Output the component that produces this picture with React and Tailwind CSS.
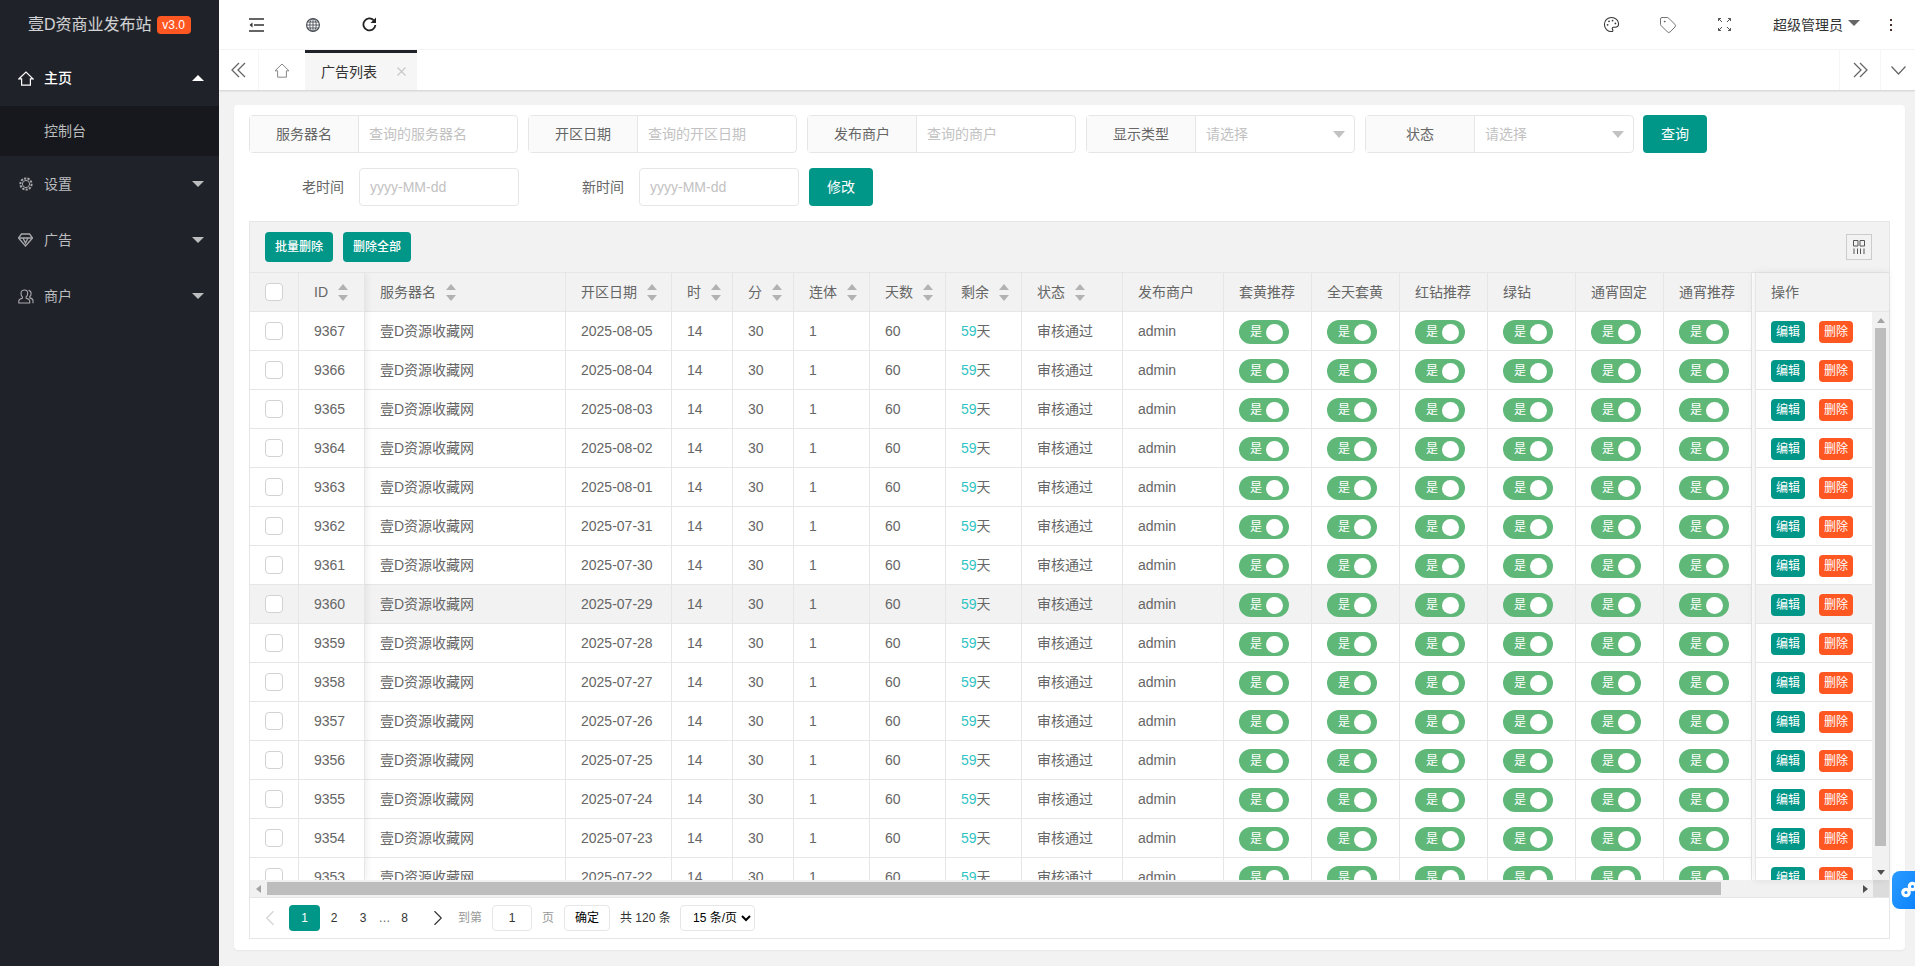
import React from 'react';
import { Palette, Tag, ChevronLeft, ChevronRight } from 'lucide-react';

const dates = [
  '2025-08-05', '2025-08-04', '2025-08-03', '2025-08-02', '2025-08-01',
  '2025-07-31', '2025-07-30', '2025-07-29', '2025-07-28', '2025-07-27',
  '2025-07-26', '2025-07-25', '2025-07-24', '2025-07-23', '2025-07-22',
];
const rows = dates.map((date, i) => ({ id: 9367 - i, date }));

const columns = [
  { title: 'ID', width: 66, sort: true },
  { title: '服务器名', width: 201, sort: true },
  { title: '开区日期', width: 106, sort: true },
  { title: '时', width: 61, sort: true },
  { title: '分', width: 61, sort: true },
  { title: '连体', width: 76, sort: true },
  { title: '天数', width: 76, sort: true },
  { title: '剩余', width: 76, sort: true },
  { title: '状态', width: 101, sort: true },
  { title: '发布商户', width: 101 },
  { title: '套黄推荐', width: 88 },
  { title: '全天套黄', width: 88 },
  { title: '红钻推荐', width: 88 },
  { title: '绿钻', width: 88 },
  { title: '通宵固定', width: 88 },
  { title: '通宵推荐', width: 88 },
];

const HOVER_ROW = 9360;

const HomeIcon = ({ className, strokeWidth = 1.2 }) => (
  <svg width="16" height="15" viewBox="0 0 16 15" fill="none" stroke="currentColor" strokeWidth={strokeWidth} className={className}>
    <path d="M1 7.8 8 1l7 6.8h-2.6v6.4H3.6V7.8z" />
  </svg>
);

const GearIcon = () => (
  <svg width="14" height="14" viewBox="0 0 14 14" fill="none" stroke="currentColor">
    <circle cx="7" cy="7" r="5.6" strokeWidth="2" strokeDasharray="2.2 1.2" />
    <circle cx="7" cy="7" r="3.6" strokeWidth="1" />
  </svg>
);

const GemIcon = () => (
  <svg width="15" height="14" viewBox="0 0 15 14" fill="none" stroke="currentColor" strokeWidth="1.3">
    <path d="M3.5 1h8l3 4-7 8-7-8z" />
    <path d="M1 5h13M5 5l2.5 5L10 5" />
  </svg>
);

const MerchantIcon = () => (
  <svg width="16" height="15" viewBox="0 0 16 15" fill="none" stroke="currentColor" strokeWidth="1.1">
    <path d="M6.5 1c2 0 3.2 1.500 3.200 3.400 0 1.500-.7 2.800-1.600 3.500v1.300c1.800.5 3.600 1.300 3.600 2.600v2.200H.8v-2.200c0-1.300 1.800-2.100 3.600-2.600V7.900C3.500 7.200 3 5.900 3 4.400 3 2.500 4.500 1 6.500 1z" />
    <path d="M10.500 1.300c1.700.4 2.600 1.700 2.600 3.200 0 1.300-.5 2.400-1.300 3v1.400c1.700.5 3.200 1.300 3.200 2.600v2.700" />
  </svg>
);

const Caret = ({ up, white }) => (
  <span
    className={`inline-block w-0 h-0 border-x-[6px] border-x-transparent ${
      up ? 'border-b-[6px] border-b-white' : `border-t-[6px] ${white ? 'border-t-white' : 'border-t-[#bcbdbf]'}`
    }`}
  />
);

const SideItem = ({ icon, label, open }) => (
  <div className="h-14 flex items-center pl-[18px] pr-[15px] text-[#a8a9ac]">
    <span className="w-[26px] flex">{icon}</span>
    <span className={`flex-1 text-sm ${open ? 'text-white font-medium' : 'text-[#bcbdbf]'}`}>{label}</span>
    <Caret up={open} />
  </div>
);

const Sidebar = () => (
  <aside className="w-[219px] shrink-0 bg-[#20222a] flex flex-col">
    <div className="h-[50px] flex items-center pl-[28px] text-white/80">
      <span className="text-base">壹D资商业发布站</span>
      <span className="ml-[5px] w-[34px] h-[18px] flex items-center justify-center bg-[#ff5722] text-white text-xs rounded-sm">v3.0</span>
    </div>
    <SideItem open label="主页" icon={<HomeIcon className="text-white" />} />
    <div className="h-[50px] bg-[#16181d] flex items-center pl-[44px] text-sm text-[#bcbdbf]">控制台</div>
    <SideItem label="设置" icon={<span className="ml-[1px] flex"><GearIcon /></span>} />
    <SideItem label="广告" icon={<GemIcon />} />
    <SideItem label="商户" icon={<MerchantIcon />} />
  </aside>
);

const FoldIcon = () => (
  <svg width="15" height="14" viewBox="0 0 15 14" fill="none" stroke="#333" strokeWidth="1.5">
    <path d="M0 1h15M5 7h10M0 13h15" />
    <path d="M3.500 4.500v5L0.500 7z" fill="#333" stroke="none" />
  </svg>
);

const GlobeIcon = () => (
  <svg width="14" height="14" viewBox="0 0 14 14" fill="none" stroke="#4a4f57" strokeWidth="0.9">
    <circle cx="7" cy="7" r="6.4" strokeWidth="1.2" />
    <ellipse cx="7" cy="7" rx="3.200" ry="6.400" />
    <path d="M7 .6v12.800M.6 7h12.800M1.500 4h11M1.500 10h11" />
  </svg>
);

const RefreshIcon = () => (
  <svg width="15" height="15" viewBox="0 0 15 15" fill="none" stroke="#222">
    <path d="M11.800 3.300A6 6 0 1 0 13.400 8" strokeWidth="1.800" />
    <path d="M14 0.500v5.500H8.500z" fill="#222" stroke="none" />
  </svg>
);

const FullscreenIcon = () => (
  <svg width="13" height="13" viewBox="0 0 13 13" fill="none" stroke="#555" strokeWidth="1">
    <path d="M.5 3V.5H3M.5 .5l3.500 3.500M12.500 3V.5H10M12.500 .5L9 4M.5 10v2.500H3M.5 12.500L4 9M12.500 10v2.500H10M12.500 12.500L9 9" />
  </svg>
);

const Header = () => (
  <header className="h-[50px] shrink-0 bg-white flex items-center border-b border-[#f6f6f6]">
    <div className="flex items-center pl-[30px] gap-[42px]">
      <FoldIcon />
      <GlobeIcon />
      <RefreshIcon />
    </div>
    <div className="ml-auto flex items-center text-[#333]">
      <Palette size={17} strokeWidth={1.5} />
      <Tag size={18} strokeWidth={1.1} className="ml-[39px] text-[#555]" />
      <span className="ml-[41px] flex"><FullscreenIcon /></span>
      <span className="ml-[42px] text-sm">超级管理员</span>
      <span className="ml-[5px] mb-[4px] w-0 h-0 border-x-[6px] border-x-transparent border-t-[6px] border-t-[#666]" />
      <span className="ml-[30px] mr-[23px] flex flex-col gap-[3px]">
        <i className="w-[2px] h-[2px] bg-[#4a2f2f]" />
        <i className="w-[2px] h-[2px] bg-[#4a2f2f]" />
        <i className="w-[2px] h-[2px] bg-[#4a2f2f]" />
      </span>
    </div>
  </header>
);

const DoubleChevron = ({ right }) => (
  <svg width="15" height="16" viewBox="0 0 15 16" fill="none" stroke="#666" strokeWidth="1.3" className={right ? 'rotate-180' : ''}>
    <path d="M8 1 1 8l7 7M14 1 7 8l7 7" />
  </svg>
);

const CloseIcon = () => (
  <svg width="9" height="9" viewBox="0 0 9 9" fill="none" stroke="#c8c8c8" strokeWidth="1.200">
    <path d="M.5 .5l8 8M8.500 .5l-8 8" />
  </svg>
);

const TabBar = () => (
  <div className="h-10 shrink-0 bg-white flex items-stretch shadow-[0_1px_2px_rgba(0,0,0,0.15)] relative">
    <div className="w-10 flex items-center justify-center border-r border-[#f6f6f6]">
      <DoubleChevron />
    </div>
    <div className="w-[46px] flex items-center justify-center">
      <HomeIcon className="text-[#888]" strokeWidth={1} />
    </div>
    <div className="w-[112px] bg-[#f6f6f6] border-t-[3px] border-[#20222a] flex items-center pl-4 text-sm text-[#333]">
      <span>广告列表</span>
      <span className="ml-[20px] flex"><CloseIcon /></span>
    </div>
    <div className="ml-auto w-[41px] flex items-center justify-center border-l border-[#f6f6f6]">
      <DoubleChevron right />
    </div>
    <div className="w-[35px] flex items-center justify-center border-l border-[#f6f6f6]">
      <svg width="15" height="9" viewBox="0 0 15 9" fill="none" stroke="#666" strokeWidth="1.200">
        <path d="M.5 .5l7 7.500 7-7.500" />
      </svg>
    </div>
  </div>
);

const Field = ({ label, placeholder }) => (
  <div className="w-[269px] h-[38px] flex border border-[#e6e6e6] rounded-sm">
    <div className="w-[109px] shrink-0 bg-[#fafafa] border-r border-[#e6e6e6] flex items-center justify-center text-sm text-[#666]">{label}</div>
    <input className="min-w-0 flex-1 pl-[10px] text-sm outline-none placeholder:text-[#c2c2c2]" placeholder={placeholder} />
  </div>
);

const SelectField = ({ label }) => (
  <div className="w-[269px] h-[38px] flex border border-[#e6e6e6] rounded-sm">
    <div className="w-[109px] shrink-0 bg-[#fafafa] border-r border-[#e6e6e6] flex items-center justify-center text-sm text-[#666]">{label}</div>
    <div className="flex-1 flex items-center justify-between pl-[10px] pr-[9px] text-sm text-[#c2c2c2]">
      <span>请选择</span>
      <span className="w-0 h-0 border-x-[6px] border-x-transparent border-t-[7px] border-t-[#c2c2c2]" />
    </div>
  </div>
);

const DateField = ({ label }) => (
  <div className="flex h-[38px]">
    <div className="w-[110px] pr-[15px] flex items-center justify-end text-sm text-[#666]">{label}</div>
    <input className="w-[160px] pl-[10px] text-sm border border-[#e6e6e6] rounded-sm outline-none placeholder:text-[#c2c2c2]" placeholder="yyyy-MM-dd" />
  </div>
);

const SearchForm = () => (
  <div className="flex flex-col gap-[15px]">
    <div className="flex gap-[10px]">
      <Field label="服务器名" placeholder="查询的服务器名" />
      <Field label="开区日期" placeholder="查询的开区日期" />
      <Field label="发布商户" placeholder="查询的商户" />
      <SelectField label="显示类型" />
      <SelectField label="状态" />
      <button className="-ml-px w-16 h-[38px] bg-[#009688] text-white text-sm rounded-sm">查询</button>
    </div>
    <div className="flex gap-[10px]">
      <DateField label="老时间" />
      <DateField label="新时间" />
      <button className="w-16 h-[38px] bg-[#009688] text-white text-sm rounded-sm">修改</button>
    </div>
  </div>
);

const Checkbox = () => (
  <span className="block w-[18px] h-[18px] bg-white border border-[#d2d2d2] rounded-sm" />
);

const SortArrows = () => (
  <span className="ml-[10px] inline-flex flex-col gap-[5px]">
    <i className="w-0 h-0 border-x-[5px] border-x-transparent border-b-[6px] border-b-[#b2b2b2]" />
    <i className="w-0 h-0 border-x-[5px] border-x-transparent border-t-[6px] border-t-[#b2b2b2]" />
  </span>
);

const Toggle = () => (
  <span className="w-[50px] h-6 rounded-full bg-[#5fb878] flex items-center justify-between pl-[11px] pr-[6px] text-xs text-white">
    <span>是</span>
    <i className="w-[17px] h-[17px] rounded-full bg-white" />
  </span>
);

const Td = ({ children, className = '' }) => (
  <td className={`border-r border-b border-[#e6e6e6] pl-[15px] whitespace-nowrap ${className}`}>{children}</td>
);

const DataTable = () => (
  <div className="relative w-[1505px] shrink-0 h-[607px] overflow-hidden">
    <table className="table-fixed border-separate border-spacing-0 w-[1502px] text-sm text-[#666]">
      <colgroup>
        <col className="w-[49px]" />
        {columns.map((c) => (
          <col key={c.title} style={{ width: c.width }} />
        ))}
      </colgroup>
      <thead>
        <tr className="h-[39px] bg-[#f2f2f2]">
          <th className="border-r border-b border-[#e6e6e6] pl-[15px] font-normal"><Checkbox /></th>
          {columns.map((c) => (
            <th key={c.title} className="border-r border-b border-[#e6e6e6] pl-[15px] font-normal text-left whitespace-nowrap">
              <span className="inline-flex items-center">
                {c.title}
                {c.sort && <SortArrows />}
              </span>
            </th>
          ))}
        </tr>
      </thead>
      <tbody>
        {rows.map((r) => (
          <tr key={r.id} className={`h-[39px] ${r.id === HOVER_ROW ? 'bg-[#f2f2f2]' : 'bg-white'}`}>
            <Td><Checkbox /></Td>
            <Td>{r.id}</Td>
            <Td>壹D资源收藏网</Td>
            <Td>{r.date}</Td>
            <Td>14</Td>
            <Td>30</Td>
            <Td>1</Td>
            <Td>60</Td>
            <Td><span className="text-[#2fc4c4]">59</span>天</Td>
            <Td>审核通过</Td>
            <Td>admin</Td>
            {[0, 1, 2, 3, 4, 5].map((n) => (
              <Td key={n} className="pt-[2px]"><Toggle /></Td>
            ))}
          </tr>
        ))}
      </tbody>
    </table>
    {/* left fixed columns shadow */}
    <div className="absolute inset-y-0 left-0 w-[115px] shadow-[1px_0_8px_rgba(0,0,0,0.08)] pointer-events-none" />
  </div>
);

const FixedActions = () => (
  <div className="relative flex-1 min-w-0 h-[607px] flex flex-col text-sm text-[#666] shadow-[-1px_0_8px_rgba(0,0,0,0.08)] bg-white overflow-hidden">
    <div className="h-[39px] shrink-0 bg-[#f2f2f2] border-b border-l border-[#e6e6e6] pl-[15px] flex items-center">操作</div>
    <div className="flex-1 flex min-h-0">
      <div className="w-[117px] shrink-0 overflow-hidden">
        {rows.map((r) => (
          <div key={r.id} className={`h-[39px] border-b border-l border-[#e6e6e6] pl-[15px] pt-[2px] flex items-center gap-[14px] ${r.id === HOVER_ROW ? 'bg-[#f2f2f2]' : 'bg-white'}`}>
            <button className="w-[34px] h-[22px] bg-[#009688] text-white text-xs rounded-sm">编辑</button>
            <button className="w-[34px] h-[22px] bg-[#ff5722] text-white text-xs rounded-sm">删除</button>
          </div>
        ))}
      </div>
      <div className="flex-1 bg-[#f1f1f1] flex flex-col items-center pt-[6px] pb-[5px]">
        <i className="w-0 h-0 border-x-[4px] border-x-transparent border-b-[5px] border-b-[#a3a3a3]" />
        <div className="w-[11px] h-[518px] mt-[5px] bg-[#bdbdbd]" />
        <i className="mt-auto w-0 h-0 border-x-[4px] border-x-transparent border-t-[5px] border-t-[#505050]" />
      </div>
    </div>
  </div>
);

const HScrollbar = () => (
  <div className="h-[17px] bg-[#f1f1f1] flex items-center">
    <i className="ml-[6px] w-0 h-0 border-y-[4px] border-y-transparent border-r-[5px] border-r-[#a3a3a3]" />
    <div className="ml-[6px] w-[1454px] h-[13px] bg-[#bdbdbd]" />
    <i className="ml-auto mr-[5px] w-0 h-0 border-y-[4px] border-y-transparent border-l-[5px] border-l-[#505050]" />
    <div className="w-[16px] h-full bg-[#dcdcdc]" />
  </div>
);

const Pagination = () => (
  <div className="h-[41px] border-t border-[#e6e6e6] flex items-center text-xs text-[#333]">
    <span className="w-[39px] flex justify-center"><ChevronLeft size={26} strokeWidth={1} className="text-[#d2d2d2]" /></span>
    <span className="w-[31px] h-[26px] bg-[#009688] text-white rounded-sm flex items-center justify-center">1</span>
    <span className="w-[28px] text-center">2</span>
    <span className="w-[30px] text-center">3</span>
    <span className="w-[13px] text-center text-[#666]">…</span>
    <span className="w-[27px] text-center">8</span>
    <span className="w-[40px] flex justify-center"><ChevronRight size={26} strokeWidth={1} className="text-[#333]" /></span>
    <span className="w-[34px] text-[#999]">到第</span>
    <input className="w-10 h-[26px] border border-[#e6e6e6] rounded-sm text-center outline-none" defaultValue="1" />
    <span className="ml-[10px] w-[22px] text-[#999]">页</span>
    <button className="w-[46px] h-[26px] border border-[#e6e6e6] rounded-sm text-black bg-white">确定</button>
    <span className="ml-[10px] w-[60px]">共 120 条</span>
    <select defaultValue="15" className="w-[75px] h-[26px] border border-[#e6e6e6] rounded-sm pl-2 bg-white text-black text-xs outline-none">
      <option value="15">15 条/页</option>
      <option value="30">30 条/页</option>
    </select>
  </div>
);

const ColsIcon = () => (
  <svg width="14" height="14" viewBox="0 0 14 14" fill="none" stroke="#555" strokeWidth="1">
    <path d="M1.500 .5h4.500v5.500H1.500zM8 .5h4.500v5.500H8zM2 8.500v5.500M5.500 8.500v5.500M8.500 8.500v5.500M12 8.500v5.500" />
  </svg>
);

const TableCard = () => (
  <div className="mt-[15px] border border-[#e6e6e6]">
    <div className="h-[51px] bg-[#f2f2f2] border-b border-[#e6e6e6] flex items-center pl-[15px] pr-[17px] gap-[10px]">
      <button className="w-[68px] h-[30px] bg-[#009688] text-white text-xs font-medium rounded-sm">批量删除</button>
      <button className="w-[68px] h-[30px] bg-[#009688] text-white text-xs font-medium rounded-sm">删除全部</button>
      <span className="ml-auto w-[26px] h-[26px] border border-[#ccc] flex items-center justify-center"><ColsIcon /></span>
    </div>
    <div className="flex">
      <DataTable />
      <FixedActions />
    </div>
    <HScrollbar />
    <Pagination />
  </div>
);

const FloatButton = () => (
  <div className="absolute right-0 top-[871px] w-[23px] h-[38px] rounded-l-lg bg-gradient-to-br from-[#2b9bff] to-[#0a84ff] overflow-hidden flex items-center pl-[9px]">
    <svg width="20" height="20" viewBox="0 0 20 20" fill="none" stroke="white" strokeWidth="3.2" className="shrink-0">
      <circle cx="5" cy="12.500" r="3.200" />
      <circle cx="11.500" cy="6.500" r="3.200" />
    </svg>
  </div>
);

export default function App() {
  return (
    <div className="relative flex h-screen overflow-hidden font-['Liberation_Sans','Noto_Sans_CJK_SC',sans-serif] bg-[#f2f2f2]">
      <Sidebar />
      <main className="flex-1 min-w-0 flex flex-col">
        <Header />
        <TabBar />
        <div className="flex-1 min-h-0 pl-[15px] pr-[10px] pt-[15px]">
          <div className="bg-white rounded-sm shadow-[0_1px_2px_rgba(0,0,0,0.05)] px-[15px] pt-[10px] pb-[11px]">
            <SearchForm />
            <TableCard />
          </div>
        </div>
      </main>
      <FloatButton />
    </div>
  );
}
